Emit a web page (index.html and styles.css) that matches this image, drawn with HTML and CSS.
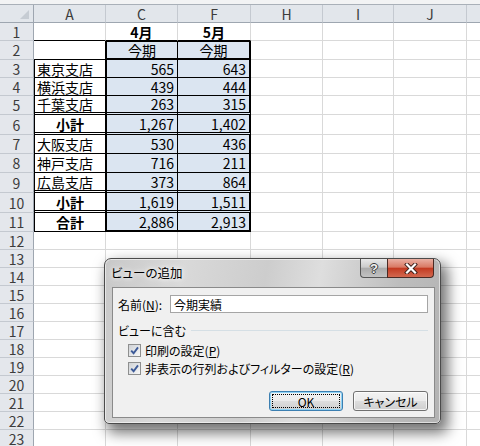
FILE: index.html
```html
<!DOCTYPE html>
<html lang="ja">
<head>
<meta charset="utf-8">
<title>ビューの追加</title>
<link rel="stylesheet" href="styles.css">
</head>
<body>
<div class="topstrip"></div>
<div class="grid">
  <div class="c corner"><i class="tri"></i></div><div class="c ch">A</div><div class="c ch">C</div><div class="c ch">F</div><div class="c ch">H</div><div class="c ch">I</div><div class="c ch">J</div><div class="c ch k"></div>

  <div class="c rh">1</div><div class="c bb"></div><div class="c bb ctr b">4月</div><div class="c bb ctr b">5月</div><div class="c"></div><div class="c"></div><div class="c"></div><div class="c k"></div>

  <div class="c rh">2</div><div class="c bb br"></div><div class="c fill bt bl br bk ctr">今期</div><div class="c fill bt brk bk ctr">今期</div><div class="c"></div><div class="c"></div><div class="c"></div><div class="c k"></div>

  <div class="c rh">3</div><div class="c bl br bb txt">東京支店</div><div class="c fill bl br bb num">565</div><div class="c fill brk bb num">643</div><div class="c"></div><div class="c"></div><div class="c"></div><div class="c k"></div>

  <div class="c rh">4</div><div class="c bl br bb txt">横浜支店</div><div class="c fill bl br bb num">439</div><div class="c fill brk bb num">444</div><div class="c"></div><div class="c"></div><div class="c"></div><div class="c k"></div>

  <div class="c rh">5</div><div class="c bl br bd txt">千葉支店</div><div class="c fill bl br bd num">263</div><div class="c fill brk bd num">315</div><div class="c"></div><div class="c"></div><div class="c"></div><div class="c k"></div>

  <div class="c rh">6</div><div class="c bl br bd ctr b">小計</div><div class="c fill bl br bd num">1,267</div><div class="c fill brk bd num">1,402</div><div class="c"></div><div class="c"></div><div class="c"></div><div class="c k"></div>

  <div class="c rh">7</div><div class="c bl br bb txt">大阪支店</div><div class="c fill bl br bb num">530</div><div class="c fill brk bb num">436</div><div class="c"></div><div class="c"></div><div class="c"></div><div class="c k"></div>

  <div class="c rh">8</div><div class="c bl br bb txt">神戸支店</div><div class="c fill bl br bb num">716</div><div class="c fill brk bb num">211</div><div class="c"></div><div class="c"></div><div class="c"></div><div class="c k"></div>

  <div class="c rh">9</div><div class="c bl br bd txt">広島支店</div><div class="c fill bl br bd num">373</div><div class="c fill brk bd num">864</div><div class="c"></div><div class="c"></div><div class="c"></div><div class="c k"></div>

  <div class="c rh">10</div><div class="c bl br bd ctr b">小計</div><div class="c fill bl br bd num">1,619</div><div class="c fill brk bd num">1,511</div><div class="c"></div><div class="c"></div><div class="c"></div><div class="c k"></div>

  <div class="c rh">11</div><div class="c bl br bb ctr b">合計</div><div class="c fill bl br bk num">2,886</div><div class="c fill brk bk num">2,913</div><div class="c"></div><div class="c"></div><div class="c"></div><div class="c k"></div>

  <div class="c rh">12</div><div class="c"></div><div class="c"></div><div class="c"></div><div class="c"></div><div class="c"></div><div class="c"></div><div class="c k"></div>
  <div class="c rh">13</div><div class="c"></div><div class="c"></div><div class="c"></div><div class="c"></div><div class="c"></div><div class="c"></div><div class="c k"></div>
  <div class="c rh">14</div><div class="c"></div><div class="c"></div><div class="c"></div><div class="c"></div><div class="c"></div><div class="c"></div><div class="c k"></div>
  <div class="c rh">15</div><div class="c"></div><div class="c"></div><div class="c"></div><div class="c"></div><div class="c"></div><div class="c"></div><div class="c k"></div>
  <div class="c rh">16</div><div class="c"></div><div class="c"></div><div class="c"></div><div class="c"></div><div class="c"></div><div class="c"></div><div class="c k"></div>
  <div class="c rh">17</div><div class="c"></div><div class="c"></div><div class="c"></div><div class="c"></div><div class="c"></div><div class="c"></div><div class="c k"></div>
  <div class="c rh">18</div><div class="c"></div><div class="c"></div><div class="c"></div><div class="c"></div><div class="c"></div><div class="c"></div><div class="c k"></div>
  <div class="c rh">19</div><div class="c"></div><div class="c"></div><div class="c"></div><div class="c"></div><div class="c"></div><div class="c"></div><div class="c k"></div>
  <div class="c rh">20</div><div class="c"></div><div class="c"></div><div class="c"></div><div class="c"></div><div class="c"></div><div class="c"></div><div class="c k"></div>
  <div class="c rh">21</div><div class="c"></div><div class="c"></div><div class="c"></div><div class="c"></div><div class="c"></div><div class="c"></div><div class="c k"></div>
  <div class="c rh">22</div><div class="c"></div><div class="c"></div><div class="c"></div><div class="c"></div><div class="c"></div><div class="c"></div><div class="c k"></div>
  <div class="c rh">23</div><div class="c"></div><div class="c"></div><div class="c"></div><div class="c"></div><div class="c"></div><div class="c"></div><div class="c k"></div>
</div>

<div class="dlg">
  <div class="titlebar">
    <span class="ttl">ビューの追加</span>
    <div class="capbtns">
      <span class="help">?</span>
      <span class="close"><svg width="14" height="11" viewBox="0 0 14 11"><path d="M3 1.5 L11 9.5 M11 1.5 L3 9.5" stroke="#3b1f19" stroke-width="4" stroke-linecap="square" fill="none"/><path d="M3 1.5 L11 9.5 M11 1.5 L3 9.5" stroke="#ffffff" stroke-width="2.2" stroke-linecap="square" fill="none"/></svg></span>
    </div>
  </div>
  <div class="client">
    <div class="namerow"><span class="lbl">名前(<u>N</u>):</span><div class="input">今期実績</div></div>
    <div class="group"><span>ビューに含む</span><span class="sep"></span></div>
    <div class="chk first"><span class="box"><svg width="11" height="11" viewBox="0 0 11 11"><path d="M2.2 5.6 L4.6 8.2 L9 2.4" stroke="#3d5a98" stroke-width="1.9" fill="none"/></svg></span><span>印刷の設定(<u>P</u>)</span></div>
    <div class="chk"><span class="box"><svg width="11" height="11" viewBox="0 0 11 11"><path d="M2.2 5.6 L4.6 8.2 L9 2.4" stroke="#3d5a98" stroke-width="1.9" fill="none"/></svg></span><span>非表示の行列およびフィルターの設定(<u>R</u>)</span></div>
    <div class="btns"><span class="btn def"><span class="focus">OK</span></span><span class="btn cancel">キャンセル</span></div>
  </div>
</div>
</body>
</html>
```

FILE: styles.css
```css
html, body { margin: 0; padding: 0; }
body {
  width: 480px;
  height: 446px;
  overflow: hidden;
  background: #fff;
  position: relative;
  font-family: "Noto Sans CJK JP", "Noto Sans", sans-serif;
}
.topstrip {
  height: 4px;
  background: #f2f3f4;
  border-bottom: 1px solid #a9b0b8;
}
.grid {
  display: grid;
  grid-template-columns: 34px 72px 72px 73px 72px 71px 73px 13px;
  grid-template-rows: 18px 18px 19px 18px 18px 19px 20px 19px 19px 20px 20px 19px repeat(12, 18px);
}
.c {
  box-sizing: border-box;
  border-right: 1px solid #d9d9d9;
  border-bottom: 1px solid #d9d9d9;
  font-size: 14px;
  line-height: 1;
  display: flex;
  align-items: center;
  white-space: nowrap;
  color: #000;
}
.k { border-right: 0; }
.ch {
  background: #e2e6eb;
  border-right-color: #c4c9d0;
  border-bottom-color: #9ea6b0;
  justify-content: center;
  color: #3c3c3c;
}
.corner {
  background: #e2e6eb;
  border-right-color: #9ea6b0;
  border-bottom-color: #9ea6b0;
  justify-content: flex-end;
  align-items: flex-end;
  padding: 0 4px 3px 0;
}
.tri {
  width: 0;
  height: 0;
  border-left: 9px solid transparent;
  border-bottom: 9px solid #c6ccd3;
}
.rh {
  background: #e4e7ec;
  border-right-color: #9ea6b0;
  border-bottom-color: #c4c9d0;
  justify-content: center;
  color: #3c3c3c;
  font-size: 14px;
}
.fill { background: #dbe5f1; }
.bb { border-bottom-color: #000; }
.bd { border-bottom: 3px double #000; }
.bk { border-bottom: 2px solid #000; }
.br { border-right-color: #000; }
.brk { border-right: 2px solid #000; }
.bl { border-left: 1px solid #000; }
.bt { border-top: 1px solid #000; }
.num { justify-content: flex-end; padding-right: 3px; }
.txt { padding-left: 2px; }
.ctr { justify-content: center; }
.b { font-weight: bold; }

/* dialog */
.dlg {
  position: absolute;
  left: 104px;
  top: 258px;
  width: 337px;
  height: 166px;
  box-sizing: border-box;
  border: 1px solid #4b4b4b;
  border-radius: 7px 7px 5px 5px;
  background: linear-gradient(100deg, #c8c8c8 0%, #d9d9d9 22%, #cdcdcd 45%, #dedede 60%, #bdbdbd 82%, #b3b3b3 100%);
  box-shadow: inset 0 0 0 1px rgba(255,255,255,0.55), 5px 7px 14px 2px rgba(0,0,0,0.55);
  display: flex;
  flex-direction: column;
  font-size: 12px;
  font-feature-settings: "palt";
  color: #000;
}
.titlebar {
  height: 28px;
  display: flex;
  align-items: flex-start;
  padding-left: 6px;
}
.ttl {
  margin-top: 7px;
  line-height: 14px;
  font-size: 12.5px;
  text-shadow: 0 0 4px #fff, 0 0 8px rgba(255,255,255,0.9);
}
.capbtns {
  margin-left: auto;
  margin-right: 6px;
  display: flex;
  height: 19px;
}
.help {
  width: 27px;
  box-sizing: border-box;
  border: 1px solid #555;
  border-top: 0;
  border-right: 0;
  border-radius: 0 0 0 4px;
  background: linear-gradient(#e8e8e8, #cbcbcb 45%, #ababab 52%, #c2c2c2);
  display: flex;
  align-items: center;
  justify-content: center;
  font-family: "Liberation Sans", sans-serif;
  font-weight: bold;
  font-size: 13px;
  color: #f2f2f2;
  text-shadow: 1px 0 #3a3a3a, -1px 0 #3a3a3a, 0 1px #3a3a3a, 0 -1px #3a3a3a;
}
.close {
  width: 47px;
  box-sizing: border-box;
  border: 1px solid #4a2a24;
  border-top: 0;
  border-radius: 0 0 4px 0;
  background: linear-gradient(#eab0a3, #d97a65 45%, #c33b22 52%, #d3684f 100%);
  display: flex;
  align-items: center;
  justify-content: center;
}
.client {
  margin: 0 5px 5px 7px;
  flex: 1;
  box-sizing: border-box;
  border: 1px solid #8a8a8a;
  background: #f0f0f0;
  display: flex;
  flex-direction: column;
}
.namerow {
  display: flex;
  align-items: center;
  margin-top: 7px;
  height: 18px;
  padding-left: 5px;
}
.lbl { width: 52px; }
.input {
  width: 258px;
  height: 18px;
  box-sizing: border-box;
  border: 1px solid #a5a5a5;
  background: #fff;
  padding-left: 3px;
  display: flex;
  align-items: center;
}
.group {
  display: flex;
  align-items: center;
  margin-top: 10px;
  height: 14px;
  padding: 0 6px 0 5px;
}
.sep {
  flex: 1;
  height: 1px;
  background: #d5dfe5;
  margin-left: 5px;
}
.chk {
  display: flex;
  align-items: center;
  height: 16px;
  padding-left: 15px;
  margin-top: 2px;
}
.chk.first { margin-top: 5px; }
.box {
  width: 13px;
  height: 13px;
  box-sizing: border-box;
  border: 1px solid #8e8f8f;
  background: linear-gradient(135deg, #cfd2d6, #f8f8f8);
  margin-right: 4px;
  display: flex;
  align-items: center;
  justify-content: center;
}
.btns {
  display: flex;
  justify-content: flex-end;
  gap: 10px;
  padding-right: 6px;
  margin-top: 15px;
}
.btn {
  box-sizing: border-box;
  height: 20px;
  border: 1px solid #707070;
  border-radius: 3px;
  background: linear-gradient(#f3f3f3 0%, #ebebeb 48%, #dddddd 52%, #cfcfcf 100%);
  box-shadow: inset 0 0 0 1px rgba(255,255,255,0.75);
  display: flex;
  align-items: center;
  justify-content: center;
  font-size: 12px;
}
.cancel { width: 75px; }
.def {
  width: 74px;
  border-color: #3c7fb1;
  box-shadow: inset 0 0 0 1px #8fd3f5;
  padding: 2px;
}
.focus {
  flex: 1;
  align-self: stretch;
  border: 1px dotted #000;
  display: flex;
  align-items: center;
  justify-content: center;
}
```
